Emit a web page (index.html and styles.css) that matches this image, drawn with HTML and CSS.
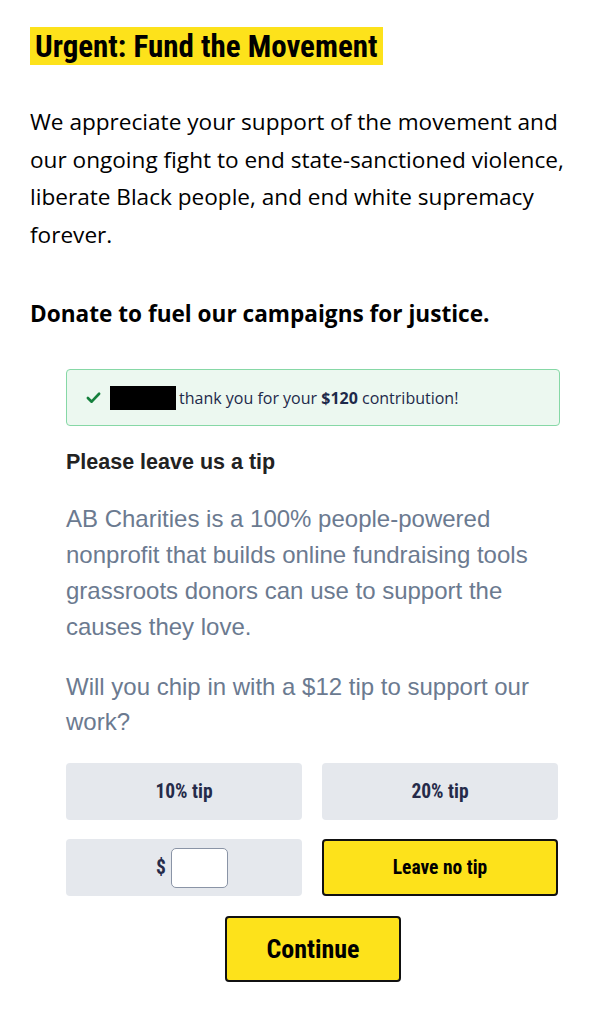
FILE: index.html
```html
<!DOCTYPE html>
<html lang="en">
<head>
<meta charset="utf-8">
<link rel="stylesheet" href="styles.css">
<title>Fund the Movement</title>
</head>
<body>
<main class="page">
  <h1 class="title"><span class="title-mark"><span class="cond">Urgent: Fund the Movement</span></span></h1>
  <p class="intro">We appreciate your support of the movement and our ongoing fight to end state-sanctioned violence, liberate Black people, and end white supremacy forever.</p>
  <p class="lead">Donate to fuel our campaigns for justice.</p>

  <section class="tip">
    <div class="alert">
      <svg class="check" viewBox="0 0 16 16" width="15" height="15" aria-hidden="true"><path d="M2 8.5 L6 12.5 L14 4" fill="none" stroke="#15803d" stroke-width="2.8" stroke-linecap="round" stroke-linejoin="round"/></svg>
      <span class="redact"></span>
      <span class="alert-text">thank you for your <b>$120</b> contribution!</span>
    </div>
    <h2 class="tip-title">Please leave us a tip</h2>
    <p class="tip-copy">AB Charities is a 100% people-powered nonprofit that builds online fundraising tools grassroots donors can use to support the causes they love.</p>
    <p class="tip-copy ask">Will you chip in with a $12 tip to support our work?</p>
    <div class="options">
      <button class="opt"><span class="cond">10% tip</span></button>
      <button class="opt"><span class="cond">20% tip</span></button>
      <div class="opt custom"><span class="cond">$</span><input class="amount" type="text" aria-label="Custom tip"></div>
      <button class="opt none"><span class="cond">Leave no tip</span></button>
    </div>
    <div class="actions">
      <button class="continue"><span class="cond">Continue</span></button>
    </div>
  </section>
</main>
</body>
</html>
```
FILE: styles.css
```css
* { box-sizing: border-box; }
body {
  margin: 0;
  background: #fff;
  font-family: "Open Sans", "Noto Sans", sans-serif;
  color: #000;
}
.page {
  padding: 27px 30px 40px 30px;
}
.cond {
  font-family: "Roboto Condensed", Roboto, sans-serif;
  font-weight: 700;
}
.title {
  margin: 0;
  font-size: 31px;
  line-height: 36px;
}
.title-mark {
  display: inline-block;
  background: #fde21b;
  padding: 0 5px;
}
.intro {
  margin: 38px 0 0;
  font-size: 22.6px;
  line-height: 37.5px;
}
.lead {
  margin: 46px 0 0;
  font-size: 22.6px;
  font-weight: 700;
  line-height: 30px;
}
.tip {
  margin: 40px 14px 0 36px;
}
.alert {
  display: flex;
  align-items: center;
  height: 57px;
  padding: 0 19px;
  border: 1px solid #86d8a6;
  border-radius: 4px;
  background: #ecf8f0;
}
.check { margin-right: 9px; }
.redact {
  display: inline-block;
  width: 66px;
  height: 24px;
  background: #000;
  margin-right: 3px;
}
.alert-text {
  font-size: 16px;
  color: #1e2a4a;
}
.alert-text b { font-weight: 700; }
.tip-title {
  margin: 23px 0 0;
  font-family: "Liberation Sans", Arial, sans-serif;
  font-size: 21.5px;
  font-weight: 700;
  color: #222;
  line-height: 26px;
}
.tip-copy {
  margin: 26px 0 0;
  font-family: "Liberation Sans", Arial, sans-serif;
  font-size: 24px;
  line-height: 36px;
  color: #6b7a90;
}
.tip-copy.ask {
  margin-top: 24px;
  line-height: 35px;
}
.options {
  display: grid;
  grid-template-columns: 1fr 1fr;
  gap: 19px 20px;
  margin-top: 24px;
  margin-right: 2px;
}
.opt {
  display: flex;
  align-items: center;
  justify-content: center;
  height: 57px;
  border: 0;
  border-radius: 4px;
  background: #e5e8ed;
  color: #252b4a;
  font-size: 19.5px;
  padding: 0;
}
.custom {
  gap: 5px;
  padding-left: 16px;
}
.amount {
  width: 57px;
  height: 40px;
  border: 1.5px solid #8a94a6;
  border-radius: 5px;
  background: #fff;
}
.none {
  background: #fde21b;
  border: 2px solid #111;
  color: #000;
}
.actions {
  display: flex;
  justify-content: center;
  margin-top: 20px;
}
.continue {
  width: 176px;
  height: 66px;
  background: #fde21b;
  border: 2px solid #111;
  border-radius: 4px;
  font-size: 26px;
  color: #000;
}
```
